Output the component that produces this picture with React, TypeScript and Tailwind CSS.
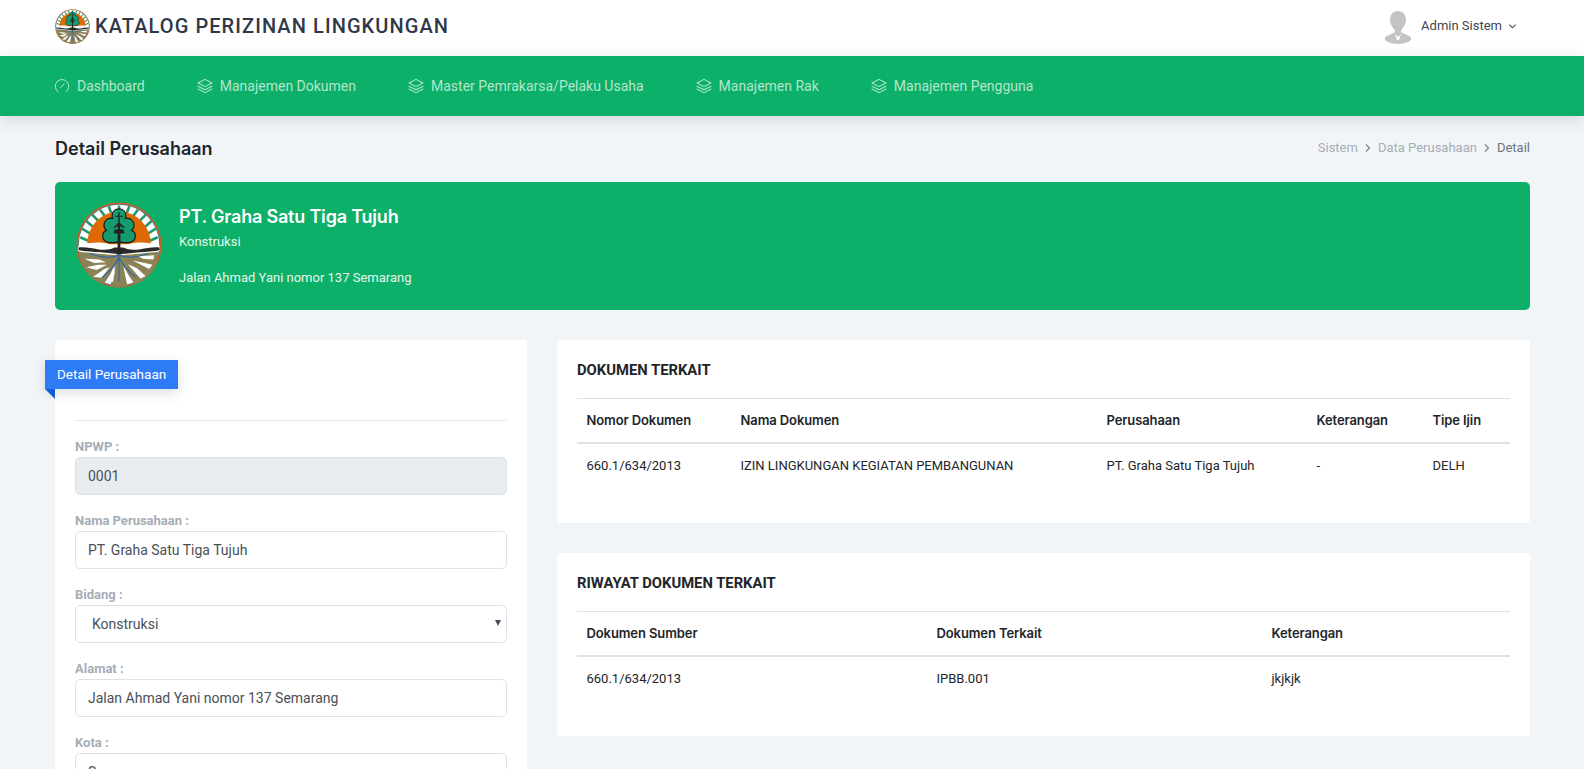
import React from "react";

const Logo = ({ className }: { className?: string }) => (
  <svg viewBox="0 0 100 100" className={className}>
    <circle cx="50" cy="50" r="49.500" fill="#c8602a" />
    <circle cx="50" cy="50" r="47.500" fill="#2a7fa8" />
    <circle cx="50" cy="50" r="46.800" fill="#fff" />
    <g stroke="#1f9a6b" strokeWidth="3" fill="none">
      <path d="M5 41l9 4M7 31l10 6M12 22l9 8M19 15l8 8M28 9l6 8M38 5l3 8M50 4v7M62 5l-3 8M72 9l-6 8M81 15l-8 8M88 22l-9 8M93 31l-10 6M95 41l-9 4" />
    </g>
    <path d="M13 49a37 38 0 0 1 74 0z" fill="#dd6a05" />
    <path d="M3 51c7-3 14-4 22-4 7 0 14 1 19 5h12c5-4 12-5 19-5 8 0 15 1 22 4l1 6H2z" fill="#fff" />
    <path d="M3 53c8-1 15 1 22 2 8 1 14 1 20-2h10c6 3 12 3 20 2 7-1 14-3 22-2l.5 3c-8 1-15 2-23 2.500-9 1-15 1.500-23 2-8-.5-14-1-23-2C20 58 11 57 3 56z" fill="#2a2a2a" />
    <path d="M3.500 58c16 1 31 3 42 3.500h9c11-.5 26-2.500 42-3.500-2 19-13 33-28 38L56 78l4 20c-7 2-13 2-20 0l4-20L32 96C17 91 6 77 3.500 58z" fill="#8c8257" />
    <g fill="#fff">
      <path d="M10 66l17 1 8 3-14 1z" />
      <path d="M12 76l14-3 10 0-12 6z" />
      <path d="M20 87l13-9 6-2-9 12z" />
      <path d="M38 92l4-13 3-5 0 8-2 11z" />
      <path d="M55 74l4 7 5 12-5 0z" />
      <path d="M60 72l11 5 10 9-6 3z" />
      <path d="M66 68l14 3 9 2-4 5z" />
      <path d="M72 63l19-1-1 5-12-1z" />
    </g>
    <g stroke="#2467b0" strokeWidth="1.200" fill="none">
      <path d="M50 56v36M50 62C40 66 30 65 16 60M50 62c10 4 20 3 34-2M50 64C46 74 38 82 30 88M50 64c4 10 12 18 20 24" />
    </g>
    <path d="M50 8c-5 0-8 3.500-8 8 0 1 0 2 .5 3-6-1-10 3-10 8 0 3 1.500 5 3 6-3 1-4.500 3.500-4.500 7 0 5 5 8 10 7 3 1 6 0 9-1 3 1 6 2 9 1 5 1 10-2 10-7 0-3.500-1.500-6-4.500-7 1.500-1 3-3 3-6 0-5-4-9-10-8 .5-1 .5-2 .5-3 0-4.500-3-8-8-8z" fill="#149b6e" stroke="#1c1c1c" strokeWidth="1.400" />
    <path d="M49.200 12h1.600v4h4v1.200h-4V24l6 6h-2l-3.500-2v28l2 5H46.700l2-5V28l-3.500 2h-2l6-6v-6.800h-4V16h4z" fill="#222" />
    <path d="M45 32h10l1.500 4-5 1v20h-3V37l-5-1z" fill="#222" />
  </svg>
);

const Gauge = () => (
  <svg viewBox="0 0 16 16" className="w-[16px] h-[16px] shrink-0" fill="none" stroke="currentColor" strokeWidth="1" strokeLinecap="round">
    <path d="M4.200 14A6.800 6.800 0 1 1 11.800 14" />
    <path d="M6.800 9.400L10.200 5.800" />
  </svg>
);

const Stack = () => (
  <svg viewBox="0 0 16 16" className="w-[16px] h-[16px] shrink-0" fill="none" stroke="currentColor" strokeWidth="1.050" strokeLinejoin="round" strokeLinecap="round">
    <path d="M8 1.400L15 5 8 8.600 1 5z" />
    <path d="M1 8.200L8 11.800 15 8.200" />
    <path d="M1 11L8 14.600 15 11" />
  </svg>
);

const Avatar = () => (
  <svg viewBox="0 0 30 34" className="w-[30px] h-[34px]" fill="#c4c4c4">
    <path d="M15 1c-5 0-8 3.600-8 8.600 0 4.600 2.400 8.200 4.800 10.400v2.200L3.800 26C1.800 27 1 29 3 31c3 2 7.500 3 12 3s9-1 12-3c2-2 1.200-4-.8-5l-8-3.800V20c2.400-2.200 4.800-5.800 4.800-10.400C23 4.600 20 1 15 1z" />
    <path d="M12 24l3 3 3-3-2 6h-2z" fill="#fff" />
  </svg>
);

const Chevron = ({ className }: { className?: string }) => (
  <svg viewBox="0 0 10 10" className={className} fill="none" stroke="currentColor" strokeWidth="1.200">
    <path d="M3 1.500L6.500 5 3 8.500" />
  </svg>
);

const navItems: [string, boolean][] = [
  ["Dashboard", true],
  ["Manajemen Dokumen", false],
  ["Master Pemrakarsa/Pelaku Usaha", false],
  ["Manajemen Rak", false],
  ["Manajemen Pengguna", false],
];

const Field = ({ label, value, disabled }: { label: string; value: string; disabled?: boolean }) => (
  <div className="mb-[16px]">
    <div className="h-[20px] text-[13px] leading-[20px] font-bold text-[#a5adb5]">{label}</div>
    <div className={`h-[38px] rounded-[5px] border border-[#dbe2e9] px-[12px] text-[14px] leading-[36px] text-[#495057] ${disabled ? "bg-[#e9ecef]" : "bg-white"}`}>
      {value}
    </div>
  </div>
);

const th = "font-semibold font-['Inter',sans-serif] text-[13px] tracking-[-0.1px] leading-[20px] text-[#212529] pl-[9.500px] pr-0 pt-[11px] pb-[12px] text-left";
const td = "text-[13px] leading-[20px] text-[#212529] pl-[9.500px] pr-0 py-[12px]";

const DocCard = ({
  title,
  heads,
  cols,
  row,
}: {
  title: string;
  heads: string[];
  cols: string[];
  row: string[];
}) => (
  <section className="bg-white rounded-[4px] h-[183px] px-[20px] pt-[20px]">
    <h3 className="text-[14.800px] leading-[20px] font-bold text-[#212529] mb-[18px]">{title}</h3>
    <table className="w-full table-fixed border-collapse">
      <colgroup>
        {cols.map((w, i) => (
          <col key={i} style={{ width: w }} />
        ))}
      </colgroup>
      <thead>
        <tr className="border-t border-[#dee2e6] border-b-2">
          {heads.map((h) => (
            <th key={h} className={th}>{h}</th>
          ))}
        </tr>
      </thead>
      <tbody>
        <tr>
          {row.map((c, i) => (
            <td key={i} className={td}>{c}</td>
          ))}
        </tr>
      </tbody>
    </table>
  </section>
);

export default function App() {
  return (
    <div className="h-screen overflow-hidden bg-[#f2f5f8] font-['Roboto',sans-serif] text-[13px] text-[#212529]">
      <header className="h-[56px] bg-white flex items-center justify-between pl-[55px] pr-[67px] pb-[3px]">
        <div className="flex items-center gap-[5px]">
          <Logo className="w-[35px] h-[35px]" />
          <span className="text-[20px] font-medium tracking-[1.080px] text-[#2f3848] -mt-[1px]">KATALOG PERIZINAN LINGKUNGAN</span>
        </div>
        <div className="flex items-center">
          <Avatar />
          <span className="ml-[8px] text-[13px] text-[#3e4553] -mt-[1px]">Admin Sistem</span>
          <svg viewBox="0 0 10 10" className="ml-[6px] w-[9px] h-[9px] text-[#3e4553]" fill="none" stroke="currentColor" strokeWidth="1.200">
            <path d="M1.500 3L5 6.500 8.500 3" />
          </svg>
        </div>
      </header>

      <nav className="h-[60px] bg-[#0cb068] flex items-center pl-[54px] gap-[52px] shadow-[0_4px_16px_rgba(60,70,90,0.16)] text-[#b3e6cd] text-[14px]">
        {navItems.map(([label, dash]) => (
          <div key={label} className="flex items-center gap-[7px] whitespace-nowrap">
            {dash ? <Gauge /> : <Stack />}
            <span>{label}</span>
          </div>
        ))}
      </nav>

      <main className="pl-[55px] pr-[54px]">
        <div className="flex items-center justify-between h-[66px] pb-[2px]">
          <h1 className="text-[18px] font-semibold text-[#212529] font-['Inter',sans-serif]">Detail Perusahaan</h1>
          <div className="flex items-center text-[13px] text-[#a5adb5]">
            <span>Sistem</span>
            <Chevron className="w-[10px] h-[10px] mx-[5px] text-[#7c858e]" />
            <span>Data Perusahaan</span>
            <Chevron className="w-[10px] h-[10px] mx-[5px] text-[#7c858e]" />
            <span className="text-[#6c757d]">Detail</span>
          </div>
        </div>

        <section className="h-[128px] rounded-[5px] bg-[#0cb068] flex items-center pl-[21px] text-white">
          <Logo className="w-[86px] h-[86px] shrink-0 -mt-[2px]" />
          <div className="ml-[17px]">
            <div className="text-[18px] leading-[24px] font-semibold font-['Inter',sans-serif] tracking-[-0.2px]">PT. Graha Satu Tiga Tujuh</div>
            <div className="text-[13px] leading-[18px] mt-[4px] text-[#e6f7ee]">Konstruksi</div>
            <div className="text-[13px] leading-[18px] mt-[18px] text-[#e6f7ee]">Jalan Ahmad Yani nomor 137 Semarang</div>
          </div>
        </section>

        <div className="flex gap-[30px] mt-[30px] items-start">
          <section className="relative w-[472px] shrink-0 bg-white rounded-[4px] px-[20px] pt-[80px]">
            <div className="absolute left-[-10px] top-[20px] h-[29px] w-[133px] bg-[#2e7bf6] text-white text-[13.500px] leading-[29px] pl-[12px] shadow-[0_4px_12px_rgba(60,70,90,0.18)]">
              Detail Perusahaan
            </div>
            <div className="absolute left-[-10px] top-[49px] w-0 h-0 border-t-[10px] border-l-[10px] border-t-[#0f5fd8] border-l-transparent" />
            <div className="border-t border-[#e3e7ec] pt-[16px]">
              <Field label="NPWP :" value="0001" disabled />
              <Field label="Nama Perusahaan :" value="PT. Graha Satu Tiga Tujuh" />
              <div className="mb-[16px]">
                <div className="h-[20px] text-[13px] leading-[20px] font-bold text-[#a5adb5]">Bidang :</div>
                <div className="relative h-[38px] rounded-[5px] border border-[#dbe2e9] bg-white pl-[16px] text-[14px] leading-[36px] text-[#495057]">
                  Konstruksi
                  <span className="absolute right-[5px] top-[14px] w-0 h-0 border-x-[3px] border-x-transparent border-t-[6px] border-t-[#495057]" />
                </div>
              </div>
              <Field label="Alamat :" value="Jalan Ahmad Yani nomor 137 Semarang" />
              <Field label="Kota :" value="Semarang" />
            </div>
          </section>

          <div className="flex-1 flex flex-col gap-[30px]">
            <DocCard
              title="DOKUMEN TERKAIT"
              heads={["Nomor Dokumen", "Nama Dokumen", "Perusahaan", "Keterangan", "Tipe Ijin"]}
              cols={["154px", "366px", "210px", "116px", "87px"]}
              row={["660.1/634/2013", "IZIN LINGKUNGAN KEGIATAN PEMBANGUNAN", "PT. Graha Satu Tiga Tujuh", "-", "DELH"]}
            />
            <DocCard
              title="RIWAYAT DOKUMEN TERKAIT"
              heads={["Dokumen Sumber", "Dokumen Terkait", "Keterangan"]}
              cols={["350px", "335px", "248px"]}
              row={["660.1/634/2013", "IPBB.001", "jkjkjk"]}
            />
          </div>
        </div>
      </main>
    </div>
  );
}
